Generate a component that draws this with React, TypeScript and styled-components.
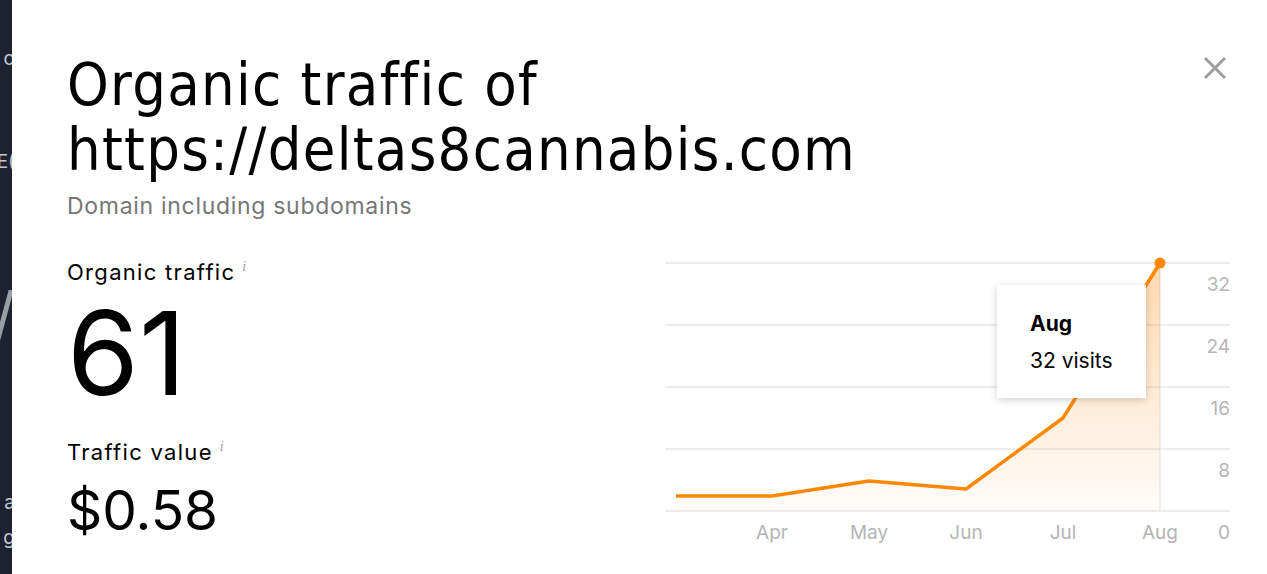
import styled, { createGlobalStyle } from 'styled-components';

const GlobalStyle = createGlobalStyle`
  html, body {
    margin: 0;
    padding: 0;
    background: #1e2230;
    overflow: hidden;
  }
  * { box-sizing: border-box; }
`;

const months = ['Apr', 'May', 'Jun', 'Jul', 'Aug'];
const ticks = [32, 24, 16, 8, 0];
const points: [number, number][] = [
  [16, 246],
  [112, 246],
  [209, 231],
  [306, 239],
  [403, 168],
  [500, 13],
];

export default function App() {
  const line = points.map(([x, y], i) => `${i ? 'L' : 'M'}${x},${y}`).join(' ');
  const area = `${line} L500,261 L16,261 Z`;

  return (
    <>
      <GlobalStyle />
      <Page>
        <Behind>
          <Peek size={19} top={49}>o</Peek>
          <Peek size={19} top={84}>E(</Peek>
          <Peek size={62} top={113} color="#9a9da3">/</Peek>
          <Peek size={19} top={147}>a</Peek>
          <Peek size={19} top={16}>g</Peek>
        </Behind>

        <Modal>
          <Header>
            <Title>
              Organic traffic of
              <br />
              https://deltas8cannabis.com
            </Title>
            <Close aria-label="Close">
              <svg width="24" height="24" viewBox="0 0 24 24">
                <path d="M2 2 L22 22 M22 2 L2 22" stroke="#9e9e9e" strokeWidth="3" />
              </svg>
            </Close>
          </Header>
          <Subtitle>Domain including subdomains</Subtitle>

          <Body>
            <Stats>
              <Label>
                Organic traffic<Info>i</Info>
              </Label>
              <BigValue>61</BigValue>
              <Label>
                Traffic value<Info>i</Info>
              </Label>
              <MoneyValue>$0.58</MoneyValue>
            </Stats>

            <ChartBox>
              <svg width="580" height="300" viewBox="0 0 580 300">
                <defs>
                  <linearGradient id="fill" x1="0" y1="0" x2="0" y2="1">
                    <stop offset="0" stopColor="#ff8800" stopOpacity="0.32" />
                    <stop offset="1" stopColor="#ff8800" stopOpacity="0.02" />
                  </linearGradient>
                </defs>
                {[13, 75, 137, 199, 261].map(y => (
                  <line key={y} x1="5" x2="570" y1={y} y2={y} stroke="#e6e6e6" strokeWidth="1.5" />
                ))}
                <line x1="500" x2="500" y1="13" y2="261" stroke="#e0e0e0" strokeWidth="1" />
                <path d={area} fill="url(#fill)" />
                <path d={line} fill="none" stroke="#ff8800" strokeWidth="3.5" strokeLinejoin="round" />
                <circle cx="500" cy="13" r="5.5" fill="#ff8800" />
                {ticks.map((t, i) => (
                  <AxisText key={t} x="570" y={41 + i * 62} textAnchor="end">{t}</AxisText>
                ))}
                {months.map((m, i) => (
                  <AxisText key={m} x={112 + i * 97} y="289" textAnchor="middle">{m}</AxisText>
                ))}
              </svg>
              <Tooltip>
                <TipMonth>Aug</TipMonth>
                <TipValue>32 visits</TipValue>
              </Tooltip>
            </ChartBox>
          </Body>
        </Modal>
      </Page>
    </>
  );
}

const Page = styled.div`
  display: flex;
  width: 1267px;
  height: 574px;
  overflow: hidden;
  font-family: Inter, 'Noto Sans', sans-serif;
`;

const Behind = styled.div`
  width: 12px;
  flex-shrink: 0;
  display: flex;
  flex-direction: column;
  align-items: flex-end;
  overflow: hidden;
  background: #1e2230;
`;

const Peek = styled.div<{ size: number; top: number; color?: string }>`
  margin-top: ${p => p.top}px;
  font-size: ${p => p.size}px;
  line-height: 1;
  color: ${p => p.color || '#c3c7cf'};
  white-space: nowrap;
  margin-right: -3px;
`;

const Modal = styled.div`
  flex: 1;
  background: #fff;
  padding: 52px 37px 0 55px;
  display: flex;
  flex-direction: column;
`;

const Header = styled.div`
  display: flex;
  justify-content: space-between;
  align-items: flex-start;
`;

const Title = styled.h1`
  margin: 0;
  font-family: 'DejaVu Sans', sans-serif;
  font-stretch: condensed;
  font-weight: 400;
  font-size: 59px;
  letter-spacing: 1.3px;
  line-height: 65px;
  color: #000;
`;

const Close = styled.button`
  border: none;
  background: none;
  padding: 0;
  margin: 4px 3px 0 0;
  cursor: pointer;
`;

const Subtitle = styled.div`
  margin-top: 10px;
  font-size: 23px;
  letter-spacing: 0.7px;
  color: #767676;
`;

const Body = styled.div`
  display: flex;
  justify-content: space-between;
  margin-top: 39px;
`;

const Stats = styled.div`
  display: flex;
  flex-direction: column;
`;

const Label = styled.div`
  font-size: 22px;
  letter-spacing: 1.3px;
  color: #000;
  display: flex;
  align-items: flex-start;
`;

const Info = styled.span`
  font-family: 'DejaVu Serif', serif;
  font-style: italic;
  font-size: 13px;
  color: #a8a8a8;
  margin-left: 7px;
`;

const BigValue = styled.div`
  font-size: 116px;
  line-height: 1;
  margin: 10px 0 28px;
  color: #000;
`;

const MoneyValue = styled.div`
  font-size: 55px;
  line-height: 1;
  margin-top: 18px;
  color: #000;
`;

const ChartBox = styled.div`
  position: relative;
  width: 580px;
  height: 300px;
  margin: -9px -10px 0 0;
`;

const AxisText = styled.text`
  font-family: Inter, sans-serif;
  font-size: 19px;
  fill: #b5b5b5;
`;

const Tooltip = styled.div`
  position: absolute;
  left: 337px;
  top: 35px;
  width: 149px;
  height: 113px;
  background: #fff;
  padding: 26px 0 0 33px;
  box-shadow: 0 2px 8px rgba(0, 0, 0, 0.18);
`;

const TipMonth = styled.div`
  font-weight: 700;
  font-size: 21px;
  color: #000;
`;

const TipValue = styled.div`
  margin-top: 12px;
  font-size: 21px;
  color: #000;
`;
